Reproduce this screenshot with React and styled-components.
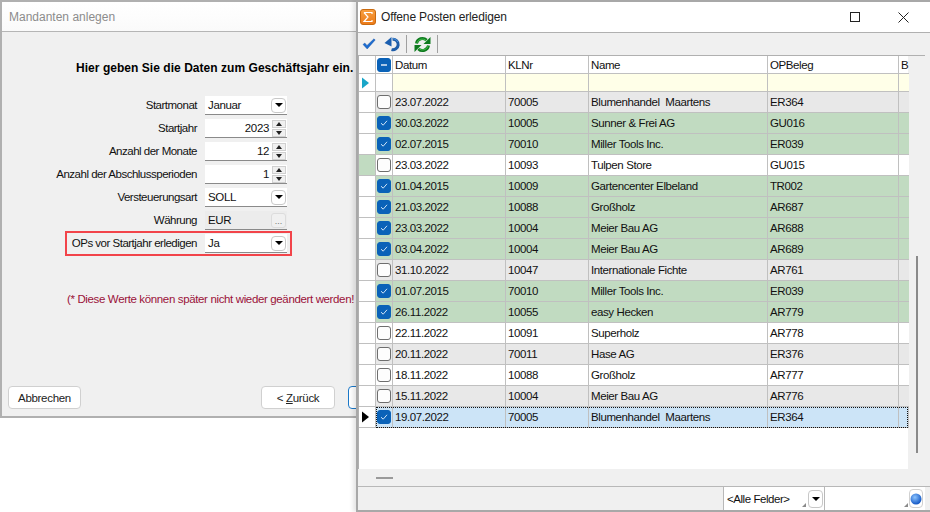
import React from "react";
import styled, { createGlobalStyle } from "styled-components";

const Global = createGlobalStyle`
  html, body { margin: 0; padding: 0; background: #fff; }
  body { width: 930px; height: 512px; overflow: hidden; font-family: "Liberation Sans", Arial, sans-serif; font-size: 12px; color: #111; }
  * { box-sizing: border-box; }
`;

const Desktop = styled.div`position: relative; width: 930px; height: 512px; background: #fff; overflow: hidden;`;

const Win = styled.div`position: absolute; top: 0; display: flex; flex-direction: column; background: #f0f0f0; border-style: solid;`;
const LeftWin = styled(Win)`left: 0; width: 400px; height: 418px; border-width: 2px 0 2px 2px; border-color: #b0b0b0;`;
const RightWin = styled(Win)`
  left: 356px; width: 574px; height: 512px; border-width: 2px 0 2px 2px; border-color: #a8a8a8;
  box-shadow: -3px 0 4px rgba(0,0,0,.1);
`;

const LeftTitle = styled.div`
  height: 30px; flex: none; background: linear-gradient(#fff, #fafafa); border-bottom: 1px solid #b5b5b5;
  padding-left: 7px; display: flex; align-items: center; color: #8c8c8c; font-size: 12px; letter-spacing: 0;
`;
const Heading = styled.div`margin: 27px 0 0 74px; font-weight: 700; font-size: 12px; color: #000; white-space: nowrap; line-height: 18px; width: 290px; letter-spacing: .04px;`;
const Form = styled.div`margin: 19px 0 0 0; display: grid; grid-template-columns: 195px 82px; column-gap: 8px; row-gap: 4px; width: 290px; position: relative;`;
const Label = styled.div`text-align: right; height: 19px; line-height: 19px; font-size: 11.5px; color: #111; white-space: nowrap; letter-spacing: -.5px;`;
const Field = styled.div`
  height: 19px; display: flex; align-items: center;
  background: ${p => p.$dim ? "#ececec" : "#fff"}; border-bottom: 1px solid #8a8a8a; padding-left: 3px; font-size: 11.5px; letter-spacing: -.35px;
`;
const FieldText = styled.span`flex: 1; text-align: ${p => p.$right ? "right" : "left"}; padding-right: ${p => p.$right ? "3px" : "0"};`;
const DropBtn = styled.span`
  width: 15px; height: 15px; margin-right: 1px; border: 1px solid #c8c8c8; border-radius: 4px; background: #fff;
  display: flex; align-items: center; justify-content: center; flex: none;
  &::after { content: ""; border-left: 4px solid transparent; border-right: 4px solid transparent; border-top: 4px solid #000; }
`;
const DotsBtn = styled.span`width: 15px; height: 15px; margin-right: 1px; border: 1px solid #dcdcdc; border-radius: 3px; background: #f0f0f0; color: #777; font-size: 9px; line-height: 14px; letter-spacing: 0; text-align: center; flex: none;`;
const Spin = styled.span`width: 14px; height: 17px; margin-right: 1px; display: flex; flex-direction: column; gap: 1px; flex: none;`;
const SpinBtn = styled.span`
  flex: 1; background: #f0f0f0; border: 1px solid #d0d0d0; display: flex; align-items: center; justify-content: center;
  &::after { content: ""; border-left: 3px solid transparent; border-right: 3px solid transparent;
    ${p => p.$up ? "border-bottom: 4px solid #222;" : "border-top: 4px solid #222;"} }
`;
const RedBox = styled.div`position: absolute; left: 63px; top: 135px; width: 227px; height: 25px; border: 2px solid #f2444a; pointer-events: none;`;
const Note = styled.div`margin: 38px 0 0 65px; color: #9b1239; font-size: 11.5px; white-space: nowrap; line-height: 16px; letter-spacing: -.36px;`;
const ButtonRow = styled.div`margin: 79px 0 0 6px; display: flex;`;
const Btn = styled.div`
  height: 23px; border: 1px solid ${p => p.$primary ? "#1a78c8" : "#d0d0d0"}; border-radius: 4px; background: #fff;
  display: flex; align-items: center; justify-content: center; font-size: 11.5px; color: #222; letter-spacing: -.3px;
  width: ${p => p.$w}px; margin-left: ${p => p.$ml || 0}px; flex: none;
`;

const RightTitle = styled.div`
  height: 31px; flex: none; background: #fff; border-bottom: 1px solid #b0b0b0; display: flex; align-items: center; padding: 0 3px 0 2px;
`;
const TitleText = styled.div`margin-left: 5px; font-size: 12px; color: #222; flex: 1; letter-spacing: -.15px;`;
const WinBtn = styled.div`width: 48px; height: 30px; display: flex; align-items: center; justify-content: center; flex: none;`;
const Toolbar = styled.div`height: 22px; flex: none; display: flex; align-items: center; padding-left: 2px; background: #f0f0f0;`;
const ToolIcon = styled.div`width: ${p => p.$w || 20}px; height: 20px; margin-left: ${p => p.$ml || 0}px; display: flex; align-items: center; justify-content: center; flex: none;`;
const ToolSep = styled.div`width: 1px; height: 18px; background: #a0a0a0; margin: 0 5px; flex: none;`;

const GridArea = styled.div`height: 414px; flex: none; display: flex; padding-right: 5px;`;
const GridBox = styled.div`width: 550px; height: 414px; background: #fff; flex: none; border-top: 1px solid #b0b0b0; border-left: 1px solid #b0b0b0;`;
const Row = styled.div`
  display: grid; grid-template-columns: 17px 17px 113px 83px 179px 131px 10px; height: ${p => p.$h || 21}px;
  position: relative;
`;
const Cell = styled.div`
  background: ${p => p.$bg || "transparent"}; border-right: 1px solid #c0c0c0; border-bottom: 1px solid #c0c0c0;
  padding-left: 2px; display: flex; align-items: center; overflow: hidden; white-space: pre; font-size: 11.5px; color: #111; letter-spacing: -.4px;
  &:last-child { border-right: 0; }
`;
const Focus = styled.div`position: absolute; left: 17px; right: 0; top: 0; bottom: 0; border: 1px dotted #111; pointer-events: none;`;
const Box = styled.span`
  width: 14px; height: 14px; border-radius: 3px; display: flex; align-items: center; justify-content: center; flex: none; margin-left: -1px;
  background: ${p => p.$on ? "#0a62b8" : "#fdfdfd"}; border: 1px solid ${p => p.$on ? "#0a62b8" : "#6e6e6e"};
`;
const Scroll = styled.div`width: 17px; flex: none; padding: 200px 0 0 8px; border-top: 1px solid #b0b0b0;`;
const Thumb = styled.div`width: 2px; height: 197px; background: #8a8a8a;`;
const BottomStrip = styled.div`height: 18px; flex: none; display: flex; align-items: center; padding-left: 18px; border-bottom: 1px solid #b8b8b8; background: #f0f0f0;`;
const Dash = styled.div`width: 17px; height: 2px; background: #9a9a9a;`;
const Status = styled.div`height: 23px; flex: none; display: flex; align-items: stretch; justify-content: flex-end; padding-right: 5px;`;
const StatusCombo = styled.div`
  width: 101px; border-left: 1px solid #b8b8b8; display: flex; align-items: center; justify-content: space-between; padding: 0 1px 0 3px; font-size: 11.5px; letter-spacing: -.45px; background: #fff; position: relative;
`;
const StatusSearch = styled.div`
  width: 101px; border-left: 1px solid #b8b8b8; display: flex; align-items: center; justify-content: flex-end; background: #fff; padding-right: 2px; position: relative;
`;
const Grip = styled.span`
  position: absolute; right: ${p => p.$r}px; bottom: 3px; width: 0; height: 0;
  border-left: 4px solid transparent; border-bottom: 4px solid #8a8a8a;
`;
const OrbBtn = styled.span`width: 14px; height: 19px; border: 1px solid #d0d0d0; border-radius: 4px; display: flex; align-items: center; justify-content: center; background: #fff; flex: none;`;
const BigDrop = styled(DropBtn)`height: 18px; width: 15px; margin-right: 0;`;

const Check = () => (
  <svg width="10" height="10" viewBox="0 0 10 10"><path d="M2 5.2 L4.2 7.2 L8 2.8" fill="none" stroke="#cfe4f7" strokeWidth="1" /></svg>
);

const rows = [
  ["23.07.2022", "70005", "Blumenhandel  Maartens", "ER364", false, "#e8e8e8"],
  ["30.03.2022", "10005", "Sunner & Frei AG", "GU016", true, "#c1dbc1"],
  ["02.07.2015", "70010", "Miller Tools Inc.", "ER039", true, "#c1dbc1"],
  ["23.03.2022", "10093", "Tulpen Store", "GU015", false, "#ffffff", "#c1dbc1"],
  ["01.04.2015", "10009", "Gartencenter Elbeland", "TR002", true, "#c1dbc1"],
  ["21.03.2022", "10088", "Großholz", "AR687", true, "#c1dbc1"],
  ["23.03.2022", "10004", "Meier Bau AG", "AR688", true, "#c1dbc1"],
  ["03.04.2022", "10004", "Meier Bau AG", "AR689", true, "#c1dbc1"],
  ["31.10.2022", "10047", "Internationale Fichte", "AR761", false, "#e8e8e8"],
  ["01.07.2015", "70010", "Miller Tools Inc.", "ER039", true, "#c1dbc1"],
  ["26.11.2022", "10055", "easy Hecken", "AR779", true, "#c1dbc1"],
  ["22.11.2022", "10091", "Superholz", "AR778", false, "#ffffff"],
  ["20.11.2022", "70011", "Hase AG", "ER376", false, "#e8e8e8"],
  ["18.11.2022", "10088", "Großholz", "AR777", false, "#ffffff"],
  ["15.11.2022", "10004", "Meier Bau AG", "AR776", false, "#e8e8e8"],
  ["19.07.2022", "70005", "Blumenhandel  Maartens", "ER364", true, "#cce4f7", null, true],
];

const Tri = ({ c = "#000" }) => <svg width="9" height="12" viewBox="0 0 9 12"><path d="M1 0.5 L8 6 L1 11.5 Z" fill={c} /></svg>;

export default function App() {
  return (
    <Desktop>
      <Global />
      <LeftWin>
        <LeftTitle>Mandanten anlegen</LeftTitle>
        <Heading>Hier geben Sie die Daten zum Geschäftsjahr ein.</Heading>
        <Form>
          <Label>Startmonat</Label>
          <Field><FieldText>Januar</FieldText><DropBtn /></Field>
          <Label>Startjahr</Label>
          <Field><FieldText $right>2023</FieldText><Spin><SpinBtn $up /><SpinBtn /></Spin></Field>
          <Label>Anzahl der Monate</Label>
          <Field><FieldText $right>12</FieldText><Spin><SpinBtn $up /><SpinBtn /></Spin></Field>
          <Label>Anzahl der Abschlussperioden</Label>
          <Field><FieldText $right>1</FieldText><Spin><SpinBtn $up /><SpinBtn /></Spin></Field>
          <Label>Versteuerungsart</Label>
          <Field><FieldText>SOLL</FieldText><DropBtn /></Field>
          <Label>Währung</Label>
          <Field $dim><FieldText>EUR</FieldText><DotsBtn>...</DotsBtn></Field>
          <Label>OPs vor Startjahr erledigen</Label>
          <Field><FieldText>Ja</FieldText><DropBtn /></Field>
          <RedBox />
        </Form>
        <Note>(* Diese Werte können später nicht wieder geändert werden!</Note>
        <ButtonRow>
          <Btn $w={73}>Abbrechen</Btn>
          <Btn $w={74} $ml={180}>&lt;&nbsp;<u>Z</u>urück</Btn>
          <Btn $w={40} $ml={13} $primary />
        </ButtonRow>
      </LeftWin>

      <RightWin>
        <RightTitle>
          <svg width="16" height="16" viewBox="0 0 16 16">
            <defs><linearGradient id="sig" x1="0" y1="0" x2="0" y2="1"><stop offset="0" stopColor="#f8a040" /><stop offset="1" stopColor="#ec7a18" /></linearGradient></defs>
            <rect x=".5" y=".5" width="15" height="15" rx="2.5" fill="url(#sig)" stroke="#c86a10" />
            <path d="M4 3.5 H12 V5 M12 12.5 H4 L8 8 L4 3.5 M4 12.5 H12 V11" fill="none" stroke="#fff" strokeWidth="1.2" />
          </svg>
          <TitleText>Offene Posten erledigen</TitleText>
          <WinBtn><svg width="10" height="10" viewBox="0 0 10 10"><rect x=".5" y=".5" width="9" height="9" fill="none" stroke="#222" /></svg></WinBtn>
          <WinBtn><svg width="11" height="11" viewBox="0 0 11 11"><path d="M.5 .5 L10.5 10.5 M10.5 .5 L.5 10.5" stroke="#222" fill="none" /></svg></WinBtn>
        </RightTitle>
        <Toolbar>
          <ToolIcon $w={17}><svg width="14" height="12" viewBox="0 0 14 12"><path d="M1 6.5 L2.8 5 L5 7.4 L12 .8 L13.2 2 L5.2 11 Z" fill="#1c6cd0" stroke="#164f9e" strokeWidth=".4" /></svg></ToolIcon>
          <ToolIcon $w={18} $ml={6}>
            <svg width="17" height="17" viewBox="0 0 17 17">
              <path d="M8.5 3.2 A5.3 5.3 0 1 1 7.5 13.6" fill="none" stroke="#1f5da8" strokeWidth="3" />
              <path d="M9 2.6 A5.8 5.8 0 0 1 14 6" fill="none" stroke="#4a90dc" strokeWidth="1" />
              <path d="M.5 7 L7.5 1 V10.5 Z" fill="#1b5fb0" />
            </svg>
          </ToolIcon>
          <ToolSep />
          <ToolIcon $w={20}>
            <svg width="17" height="17" viewBox="0 0 17 17">
              <path d="M2.5 7.5 A6 6 0 0 1 12.6 4.2" fill="none" stroke="#0e7a1e" strokeWidth="3" />
              <path d="M9.5 8 L16.5 8 L16.5 1 Z" fill="#0e7a1e" />
              <path d="M14.5 9.5 A6 6 0 0 1 4.4 12.8" fill="none" stroke="#0e7a1e" strokeWidth="3" />
              <path d="M7.5 9 L.5 9 L.5 16 Z" fill="#0e7a1e" />
              <path d="M3 6.8 A5.6 5.6 0 0 1 12 4.4" fill="none" stroke="#46c24e" strokeWidth="1" />
              <path d="M14 10.2 A5.6 5.6 0 0 1 5 12.6" fill="none" stroke="#46c24e" strokeWidth="1" />
            </svg>
          </ToolIcon>
          <ToolSep />
        </Toolbar>
        <GridArea>
          <GridBox>
            <Row $h={18}>
              <Cell />
              <Cell><Box $on><svg width="10" height="10" viewBox="0 0 10 10"><path d="M2 5 H8" stroke="#fff" strokeWidth="1.3" /></svg></Box></Cell>
              <Cell>Datum</Cell><Cell>KLNr</Cell><Cell>Name</Cell><Cell>OPBeleg</Cell><Cell>B</Cell>
            </Row>
            <Row $h={18}>
              <Cell><Tri c="#1aa6c8" /></Cell>
              <Cell />
              <Cell $bg="#ffffe8" /><Cell $bg="#ffffe8" /><Cell $bg="#ffffe8" /><Cell $bg="#ffffe8" /><Cell $bg="#ffffe8" />
            </Row>
            {rows.map((r, i) => (
              <Row key={i}>
                <Cell $bg={r[6] || undefined}>{r[7] && <Tri />}</Cell>
                <Cell $bg={r[5]}><Box $on={r[4]}>{r[4] && <Check />}</Box></Cell>
                <Cell $bg={r[5]}>{r[0]}</Cell>
                <Cell $bg={r[5]}>{r[1]}</Cell>
                <Cell $bg={r[5]}>{r[2]}</Cell>
                <Cell $bg={r[5]}>{r[3]}</Cell>
                <Cell $bg={r[5]} />
                {r[7] && <Focus />}
              </Row>
            ))}
          </GridBox>
          <Scroll><Thumb /></Scroll>
        </GridArea>
        <BottomStrip><Dash /></BottomStrip>
        <Status>
          <StatusCombo>&lt;Alle Felder&gt;<BigDrop /><Grip $r={18} /></StatusCombo>
          <StatusSearch>
            <Grip $r={17} />
            <OrbBtn>
              <svg width="12" height="12" viewBox="0 0 12 12">
                <defs><radialGradient id="orb" cx=".4" cy=".35" r=".7"><stop offset="0" stopColor="#8cc4ff" /><stop offset="1" stopColor="#0a4fc0" /></radialGradient></defs>
                <circle cx="6" cy="6" r="5.5" fill="url(#orb)" />
              </svg>
            </OrbBtn>
          </StatusSearch>
        </Status>
      </RightWin>
    </Desktop>
  );
}
